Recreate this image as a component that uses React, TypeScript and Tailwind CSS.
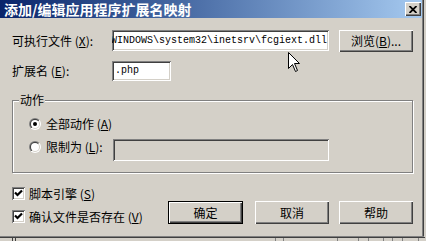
const sunken =
  "shadow-[inset_1px_1px_0_#808080,inset_-1px_-1px_0_#ffffff,inset_2px_2px_0_#404040,inset_-2px_-2px_0_#d4d0c8]";
const raised =
  "shadow-[inset_1px_1px_0_#ffffff,inset_-1px_-1px_0_#404040,inset_-2px_-2px_0_#808080]";

function Radio({ checked }: { checked?: boolean }) {
  return (
    <svg width="12" height="12" viewBox="0 0 12 12" className="shrink-0">
      <defs>
        <linearGradient id="ro" x1="0" y1="0" x2="1" y2="1">
          <stop offset="0.5" stopColor="#808080" />
          <stop offset="0.5" stopColor="#ffffff" />
        </linearGradient>
        <linearGradient id="ri" x1="0" y1="0" x2="1" y2="1">
          <stop offset="0.5" stopColor="#404040" />
          <stop offset="0.5" stopColor="#d4d0c8" />
        </linearGradient>
      </defs>
      <circle cx="6" cy="6" r="6" fill="url(#ro)" />
      <circle cx="6" cy="6" r="5" fill="url(#ri)" />
      <circle cx="6" cy="6" r="4" fill="#ffffff" />
      {checked && <circle cx="6" cy="6" r="2" fill="#000000" />}
    </svg>
  );
}

function Check() {
  return (
    <div className={`relative w-[13px] h-[13px] shrink-0 bg-white ${sunken}`}>
      <svg width="13" height="13" viewBox="0 0 13 13" className="absolute inset-0">
        <polyline points="3,5.5 5.5,8 10,3.5" fill="none" stroke="#000" strokeWidth="2.2" />
      </svg>
    </div>
  );
}

function Button({ children, w, def }: { children: React.ReactNode; w: string; def?: boolean }) {
  return (
    <div
      className={`${w} h-[23px] flex items-center justify-center ${
        def ? "border border-black shadow-[inset_1px_1px_0_#ffffff,inset_-1px_-1px_0_#404040,inset_-2px_-2px_0_#808080]" : raised
      }`}
    >
      {children}
    </div>
  );
}

export default function App() {
  return (
    <div className="w-[426px] h-[241px] bg-[#d4d0c8] overflow-hidden relative font-['Noto_Sans_CJK_SC','Noto_Sans',sans-serif] text-[12px] leading-[12px] text-black">
      <div className="flex h-[236px]">
        <div className="w-[422px] flex flex-col">
          {/* title bar */}
          <div className="h-[18px] bg-linear-to-r from-[#0a246a] to-[#a6caf0] flex items-center pl-[4px] pr-[1px]">
            <span className="text-white font-bold text-[14px] leading-[14px]">
              添加/编辑应用程序扩展名映射
            </span>
            <div className={`ml-auto w-[16px] h-[14px] bg-[#d4d0c8] ${raised} flex items-center justify-center`}>
              <svg width="8" height="7" viewBox="0 0 8 7">
                <path d="M0.5 0 L7.5 7 M7.5 0 L0.5 7" stroke="#000" strokeWidth="1.8" />
              </svg>
            </div>
          </div>

          <div className="pl-[12px] pt-[12px]">
            {/* executable */}
            <div className="flex items-start">
              <div className="w-[100px] h-[21px] flex items-center">
                可执行文件 (<u>X</u>):
              </div>
              <div className={`w-[217px] h-[21px] bg-white ${sunken} flex items-center justify-end overflow-hidden pr-[2px]`}>
                <span className="shrink-0 whitespace-nowrap font-['Liberation_Mono',monospace] text-[10px]">
                  C:\WINDOWS\system32\inetsrv\fcgiext.dll
                </span>
              </div>
              <div className="ml-[10px]">
                <div className={`w-[74px] h-[22px] flex items-center justify-center ${raised}`}>
                  浏览(<u>B</u>)...
                </div>
              </div>
            </div>

            {/* extension */}
            <div className="flex items-start mt-[9px]">
              <div className="w-[100px] h-[20px] flex items-center">
                扩展名 (<u>E</u>):
              </div>
              <div className={`w-[59px] h-[20px] bg-white ${sunken} flex items-center pl-[3px]`}>
                <span className="font-['Liberation_Mono',monospace] text-[10px]">.php</span>
              </div>
            </div>

            {/* verbs group */}
            <div className="relative mt-[19px] w-[401px] h-[73px] border border-[#808080] shadow-[inset_1px_1px_0_#ffffff,1px_1px_0_#ffffff] pl-[16px] pt-[15px]">
              <span className="absolute left-[6px] top-[-7px] px-px bg-[#d4d0c8]">动作</span>
              <div className="flex items-center h-[16px]">
                <Radio checked />
                <span className="ml-[5px]">
                  全部动作 (<u>A</u>)
                </span>
              </div>
              <div className="flex items-start mt-[7px]">
                <div className="w-[84px] h-[16px] flex items-center">
                  <Radio />
                  <span className="ml-[5px]">
                    限制为 (<u>L</u>):
                  </span>
                </div>
                <div className={`w-[216px] h-[22px] bg-[#d4d0c8] ${sunken}`} />
              </div>
            </div>

            {/* options + buttons */}
            <div className="flex mt-[14px]">
              <div className="w-[156px] flex flex-col gap-[10px]">
                <div className="flex items-center h-[13px]">
                  <Check />
                  <span className="ml-[4px]">
                    脚本引擎 (<u>S</u>)
                  </span>
                </div>
                <div className="flex items-center h-[13px]">
                  <Check />
                  <span className="ml-[4px]">
                    确认文件是否存在 (<u>V</u>)
                  </span>
                </div>
              </div>
              <div className="flex mt-[14px]">
                <Button w="w-[75px]" def>
                  确定
                </Button>
                <div className="ml-[12px]">
                  <Button w="w-[74px]">取消</Button>
                </div>
                <div className="ml-[10px]">
                  <Button w="w-[74px]">帮助</Button>
                </div>
              </div>
            </div>
          </div>
        </div>
        <div className="w-px bg-[#808080]" />
        <div className="w-px bg-[#404040]" />
      </div>
      <div className="w-[424px] h-px bg-[#808080]" />
      <div className="w-[425px] h-px bg-[#404040]" />
      {/* window behind */}
      <div className="flex h-[3px]">
        <div className="ml-[12px] w-px bg-[#404040]" />
        <div className="ml-[2px] w-px bg-[#404040]" />
        <div className="ml-[259px] w-px bg-[#808080]" />
        <div className="ml-[7px] w-px bg-[#808080]" />
        <div className="ml-[53px] w-px bg-[#808080]" />
        <div className="ml-[20px] w-px bg-[#808080]" />
        <div className="ml-[9px] w-px bg-[#808080]" />
        <div className="ml-[14px] w-px bg-[#808080]" />
        <div className="ml-[8px] w-px bg-[#808080]" />
        <div className="ml-[9px] w-px bg-[#808080]" />
        <div className="ml-[15px] w-px bg-[#808080]" />
      </div>

      {/* mouse pointer */}
      <svg width="13" height="21" viewBox="0 0 13 21" className="absolute left-[288px] top-[52px]">
        <path d="M0.5 0.5 V16.5 L4.5 12.5 L7.5 19.5 L9.5 18.5 L6.5 11.5 H11.5 Z" fill="#ffffff" stroke="#000" strokeWidth="1" />
      </svg>
    </div>
  );
}
